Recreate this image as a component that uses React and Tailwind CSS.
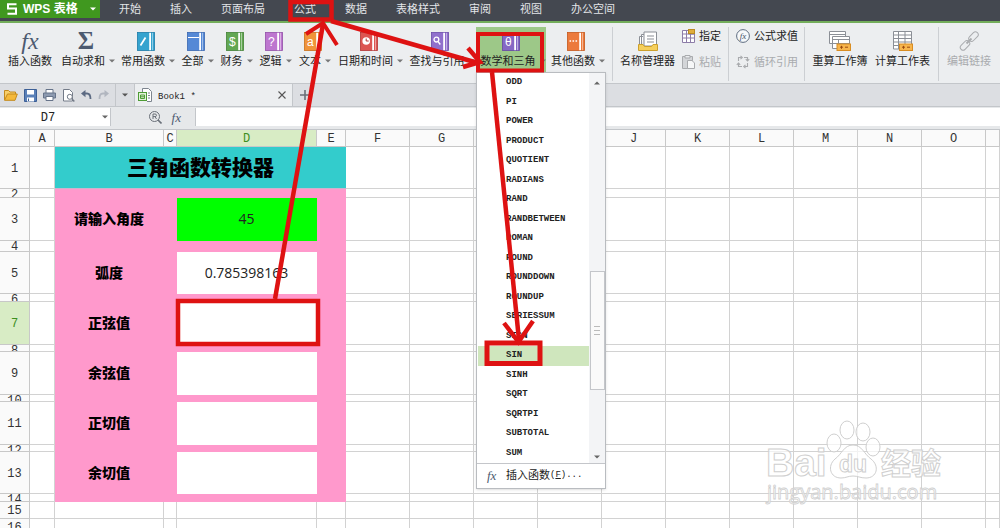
import { useState } from 'react';
import clsx from 'clsx';

const MENUS = ['开始', '插入', '页面布局', '公式', '数据', '表格样式', '审阅', '视图', '办公空间'];

const FUNCTIONS = [
  'ODD', 'PI', 'POWER', 'PRODUCT', 'QUOTIENT', 'RADIANS', 'RAND', 'RANDBETWEEN', 'ROMAN', 'ROUND',
  'ROUNDDOWN', 'ROUNDUP', 'SERIESSUM', 'SIGN', 'SIN', 'SINH', 'SQRT', 'SQRTPI', 'SUBTOTAL', 'SUM',
];

const COLUMNS = [
  ['A', 'w-[25px]'], ['B', 'w-[109px]'], ['C', 'w-[13px]'], ['D', 'w-[140px]'], ['E', 'w-[29px]'],
  ['F', 'w-16'], ['G', 'w-16'], ['H', 'w-16'], ['I', 'w-16'], ['J', 'w-16'],
  ['K', 'w-16'], ['L', 'w-16'], ['M', 'w-16'], ['N', 'w-16'], ['O', 'w-16'], ['', ''],
];

const ROWS = [
  { n: 1, h: 'h-[41px]', title: '三角函数转换器' },
  { n: 2, h: 'h-2' },
  { n: 3, h: 'h-[42px]', label: '请输入角度', value: '45', input: true },
  { n: 4, h: 'h-[10px]' },
  { n: 5, h: 'h-[41px]', label: '弧度', value: '0.785398163' },
  { n: 6, h: 'h-[7px]' },
  { n: 7, h: 'h-[42px]', label: '正弦值' },
  { n: 8, h: 'h-[6px]' },
  { n: 9, h: 'h-[42px]', label: '余弦值' },
  { n: 10, h: 'h-[6px]' },
  { n: 11, h: 'h-[42px]', label: '正切值' },
  { n: 12, h: 'h-[6px]' },
  { n: 13, h: 'h-[41px]', label: '余切值' },
  { n: 14, h: 'h-[7px]' },
  { n: 15, h: 'h-4', plain: true },
  { n: 16, h: 'h-4', plain: true },
];

function Caret({ className }) {
  return (
    <svg className={clsx('shrink-0', className)} width="6" height="4" viewBox="0 0 6 4">
      <path d="M0 0.5H6L3 3.5Z" fill="currentColor" />
    </svg>
  );
}

function Book({ fill, edge, children }) {
  return (
    <svg width="18" height="19" viewBox="0 0 18 19">
      <rect x="0.5" y="0.5" width="17" height="18" fill={fill} stroke={edge} strokeWidth="0.8" />
      <rect x="12.2" y="0.8" width="1.8" height="17.4" fill="#fff" />
      <rect x="15" y="0.8" width="1" height="17.4" fill="#fff" fillOpacity="0.45" />
      <g fill="none" stroke="#fff" strokeWidth="1.3">{children}</g>
    </svg>
  );
}

function BookText({ children }) {
  return (
    <text x="6.3" y="13.5" textAnchor="middle" fontSize="12" fill="#fff" stroke="none" fontFamily="Liberation Sans, sans-serif">
      {children}
    </text>
  );
}

function Fx({ className }) {
  return <span className={clsx('font-["Liberation_Serif",serif] italic text-[#4c5a70]', className)}>fx</span>;
}

const BOOKS = [
  { label: '常用函数', w: 'w-[60px]', icon: <Book fill="#35a3cf" edge="#1c7ba8"><path d="M3.5 13.5L8.5 5.5" strokeWidth="1.8" /></Book> },
  { label: '全部', w: 'w-[39px]', icon: <Book fill="#5589d6" edge="#3a66b0"><path d="M1 5.5H12" strokeWidth="1" /></Book> },
  { label: '财务', w: 'w-[39px]', icon: <Book fill="#62a752" edge="#438136"><BookText>$</BookText></Book> },
  { label: '逻辑', w: 'w-[39px]', icon: <Book fill="#bd76cf" edge="#9250a8"><BookText>?</BookText></Book> },
  { label: '文本', w: 'w-[40px]', icon: <Book fill="#f0943a" edge="#c96f1a"><BookText>a</BookText></Book> },
  { label: '日期和时间', w: 'w-[71px]', icon: <Book fill="#dc5552" edge="#b23534"><circle cx="6.2" cy="9" r="3.8" fill="#fff" stroke="none" /><path d="M6.2 6.5V9H8.7" stroke="#b23534" strokeWidth="1" /></Book> },
  { label: '查找与引用', w: 'w-[72px]', icon: <Book fill="#9070cc" edge="#6a4aa8"><circle cx="5.4" cy="7.6" r="2.4" /><path d="M7 9.5L9.3 12.5" /></Book> },
];

function ToolButton({ icon, label, width, caret = true, disabled, className }) {
  return (
    <button
      disabled={disabled}
      className={clsx('flex h-[46px] shrink-0 flex-col items-center pt-1', width, disabled ? 'text-[#a9abae]' : 'text-[#222]', className)}
    >
      <span className="flex h-5 items-center justify-center">{icon}</span>
      <span className={clsx('flex items-center gap-1 whitespace-nowrap leading-5', caret && 'pl-1')}>
        {label}
        {caret && <Caret className="text-[#777]" />}
      </span>
    </button>
  );
}

function SmallTool({ icon, label, disabled }) {
  return (
    <button disabled={disabled} className={clsx('flex h-[18px] items-center gap-1 whitespace-nowrap', disabled ? 'text-[#a9abae]' : 'text-[#222]')}>
      {icon}
      {label}
    </button>
  );
}

function Separator() {
  return <div className="h-[54px] w-px shrink-0 bg-[#cccfd3]" />;
}

function TitleBar() {
  return (
    <header className="flex h-[23px] shrink-0 items-start border-b-2 border-[#73ad5b] bg-[#444850] text-white">
      <button className="flex h-[18px] w-[100px] shrink-0 items-center bg-[#40981f] pl-[7px] text-xs font-bold">
        <svg width="10" height="12" viewBox="0 0 10 12" fill="none" stroke="#fff" strokeWidth="2">
          <path d="M9.5 1.2H1V5.5H9V10.8H0.5" />
        </svg>
        <span className="ml-1.5 whitespace-nowrap">WPS 表格</span>
        <Caret className="ml-auto mr-1" />
      </button>
      <nav className="ml-[19px] flex h-[18px] items-center gap-[29px] text-[#e3e5e8]">
        {MENUS.map(m => <button key={m} className="shrink-0 whitespace-nowrap">{m}</button>)}
      </nav>
    </header>
  );
}

function FunctionMenu({ selected, onSelect }) {
  return (
    <div className="absolute left-0 top-[45px] z-10 w-[130px] border border-[#b9bcc0] bg-white pb-px shadow-sm">
      <div className="flex h-[390px]">
        <div className="flex flex-1 flex-col pl-px">
          {FUNCTIONS.map(f => (
            <button
              key={f}
              onClick={() => onSelect(f)}
              className={clsx(
                'flex flex-1 items-center pl-7 text-left font-["Liberation_Mono",monospace] text-[9px] font-bold leading-none text-[#222]',
                f === selected && 'bg-[#cfe6bd]'
              )}
            >
              {f}
            </button>
          ))}
        </div>
        <div className="flex w-4 flex-col items-center bg-[#f3f4f6] text-[#666]">
          <Caret className="mt-2 rotate-180" />
          <div className="mt-[186px] flex h-[119px] w-[15px] flex-col items-center justify-center gap-[3px] border border-[#c4c6ca] bg-[#fafafa]">
            <i className="h-px w-1.5 bg-[#bbb]" />
            <i className="h-px w-1.5 bg-[#bbb]" />
            <i className="h-px w-1.5 bg-[#bbb]" />
          </div>
          <Caret className="mb-1 mt-auto" />
        </div>
      </div>
      <button className="flex h-6 w-full items-center border-t border-[#c4c6ca] pl-2.5 text-[#222]">
        <Fx className="w-[19px] text-left text-[13px]" />
        <span>插入函数</span>
        <span className="font-['Liberation_Mono',monospace] text-[9px]">(<u>F</u>)...</span>
      </button>
    </div>
  );
}

function Ribbon() {
  const [selected, setSelected] = useState('SIN');

  return (
    <div className="flex h-[61px] shrink-0 items-start border-b border-[#c3c6ca] bg-[#eceef0] pl-1 pt-1">
      <ToolButton width="w-[52px]" label="插入函数" caret={false} icon={<Fx className="text-2xl leading-5" />} />
      <ToolButton
        width="w-[60px]"
        label="自动求和"
        icon={<span className="font-['Liberation_Serif',serif] text-[25px] font-bold leading-5 text-[#4c5a70]">Σ</span>}
      />
      {BOOKS.map(b => <ToolButton key={b.label} width={b.w} label={b.label} icon={b.icon} />)}
      <div className="relative shrink-0">
        <ToolButton
          width="w-[70px]"
          className="bg-[#9dc888]"
          label="数学和三角"
          icon={<Book fill="#8668c4" edge="#6546a4"><BookText>θ</BookText></Book>}
        />
        <FunctionMenu selected={selected} onSelect={setSelected} />
      </div>
      <ToolButton
        width="w-[60px]"
        label="其他函数"
        icon={<Book fill="#ec7a3c" edge="#c4571c"><path d="M2.5 9H10.5" strokeWidth="1.6" strokeDasharray="1.6 1.4" /></Book>}
      />
      <div className="w-1.5 shrink-0" />
      <Separator />
      <ToolButton
        width="w-[69px]"
        label="名称管理器"
        caret={false}
        icon={
          <svg width="20" height="20" viewBox="0 0 20 20" fill="#fff" stroke="#8b8f96">
            <path d="M1.5 15V5.5H5M3.5 15V3.5H6" />
            <path d="M6 1H18.5V15H6Z" />
            <path d="M9 5H16M9 8H16M9 11H16" />
            <path d="M0.5 13.5H5L6.5 15.5H13.5L15 13.5H19.5V19.5H0.5Z" fill="#f5cf5c" stroke="#cda02c" />
          </svg>
        }
      />
      <div className="flex w-[46px] shrink-0 flex-col gap-2">
        <SmallTool
          label="指定"
          icon={
            <svg width="13" height="14" viewBox="0 0 13 14" fill="#fff" stroke="#8d7da8">
              <path d="M0.5 1.5H6.5V5H12.5V13.5H0.5Z" />
              <path d="M0.5 5H12.5M0.5 9H12.5M4.5 1.5V13.5M8.5 5V13.5" />
              <rect x="6.5" y="0.5" width="6" height="4" fill="#e0ad3e" stroke="#b98a22" />
            </svg>
          }
        />
        <SmallTool
          disabled
          label="粘贴"
          icon={
            <svg width="13" height="14" viewBox="0 0 13 14" fill="#d3d5d8" stroke="#a9abae">
              <path d="M0.5 1.5H10.5V13.5H0.5Z" />
              <path d="M3 0.5H8V3H3Z" fill="#eceef0" />
              <path d="M5.5 5.5H10L12.5 8V13.5H5.5Z" fill="#f6f7f8" />
            </svg>
          }
        />
      </div>
      <Separator />
      <div className="flex w-[75px] shrink-0 flex-col gap-2 pl-[7px]">
        <SmallTool
          label="公式求值"
          icon={
            <svg width="14" height="14" viewBox="0 0 14 14">
              <circle cx="7" cy="7" r="6.4" fill="#f6f8fa" stroke="#5e6c80" />
              <text x="7" y="10" fontSize="9" fontStyle="italic" textAnchor="middle" fill="#3f4f68" fontFamily="Liberation Serif, serif">fx</text>
            </svg>
          }
        />
        <SmallTool
          disabled
          label="循环引用"
          icon={
            <svg width="14" height="14" viewBox="0 0 14 14" fill="none" stroke="#a9abae" strokeWidth="1.1">
              <path d="M2.5 6V2.5H5.5M8 2.5H11.5V5.5M11.5 8V11.5H8.5M6 11.5H2.5V8.5" />
              <path d="M4.5 0.8L6.3 2.5L4.5 4.2M9.8 4.2L11.5 6L13.2 4.2M9.5 9.8L7.7 11.5L9.5 13.2M0.8 9.8L2.5 8L4.2 9.8" />
            </svg>
          }
        />
      </div>
      <Separator />
      <ToolButton
        width="w-[70px]"
        label="重算工作簿"
        caret={false}
        icon={
          <svg width="22" height="20" viewBox="0 0 22 20" fill="#fff" stroke="#8b8f96">
            <path d="M0.5 0.5H16.5V12.5H0.5ZM0.5 3.5H16.5" />
            <path d="M3.5 5.5H20.5V17.5H3.5ZM3.5 8.5H20.5M9.5 8.5V17M3.5 12.5H20" />
            <rect x="8" y="13" width="13.5" height="6.5" fill="#f7b54d" stroke="#d98d22" />
            <path d="M11 16.2H14M12.5 14.8V17.8M16 16.2H19" stroke="#9a4a10" />
          </svg>
        }
      />
      <ToolButton
        width="w-[55px]"
        label="计算工作表"
        caret={false}
        icon={
          <svg width="22" height="20" viewBox="0 0 22 20" fill="#fff" stroke="#8b8f96">
            <path d="M1.5 0.5H19.5V18H1.5Z" />
            <path d="M1.5 4H19.5M1.5 7.5H19.5M1.5 11H19.5M1.5 14.5H19.5M6.5 0.5V18M13 0.5V18" />
            <rect x="7.5" y="13" width="13" height="6.5" fill="#f7b54d" stroke="#d98d22" />
            <path d="M10 16.2H13M11.5 14.8V17.8M15 16.2H18" stroke="#9a4a10" />
          </svg>
        }
      />
      <div className="w-2 shrink-0" />
      <Separator />
      <ToolButton
        disabled
        width="w-[60px]"
        label="编辑链接"
        caret={false}
        icon={
          <svg width="20" height="20" viewBox="0 0 20 20" fill="none" stroke="#a9abae">
            <rect x="9" y="2.8" width="11" height="5.6" rx="2.8" transform="rotate(-45 14.5 5.6)" />
            <rect x="0.5" y="11.6" width="11" height="5.6" rx="2.8" transform="rotate(-45 6 14.4)" />
            <path d="M7.5 12.5L12.5 7.5" strokeWidth="1.8" />
          </svg>
        }
      />
    </div>
  );
}

function QuickBar() {
  return (
    <div className="flex h-[23px] shrink-0 items-stretch border-b border-[#c3c6ca] bg-[#dcdee2] text-[#555]">
      <div className="flex w-[115px] shrink-0 items-center justify-between pl-1 pr-1.5">
        <button aria-label="打开">
          <svg width="14" height="12" viewBox="0 0 14 12" fill="#f8cf6a" stroke="#c48a1c">
            <path d="M0.5 11V1.5H4.5L6 3H11.5V5" />
            <path d="M0.5 11.3L3.5 5H13.3L11 11.3Z" fill="#f5b93a" />
          </svg>
        </button>
        <button aria-label="保存">
          <svg width="13" height="13" viewBox="0 0 13 13" fill="#5a80b8" stroke="#3c5f96">
            <path d="M0.5 0.5H12.5V12.5H0.5Z" />
            <path d="M3 1H10V5.5H3ZM3 8.5H10V12.5H3Z" fill="#fff" stroke="none" />
            <path d="M4.5 9.5V12" />
          </svg>
        </button>
        <button aria-label="打印">
          <svg width="13" height="12" viewBox="0 0 13 12" fill="#fff" stroke="#67748a">
            <path d="M3 4V0.5H10V4" />
            <path d="M0.5 4H12.5V9H0.5Z" fill="#8d9ab0" />
            <path d="M3 7.5H10V11.5H3Z" />
          </svg>
        </button>
        <button aria-label="打印预览">
          <svg width="12" height="13" viewBox="0 0 12 13" fill="#fff" stroke="#737b88">
            <path d="M0.5 0.5H6.5L9.5 3.5V12H0.5Z" />
            <circle cx="6.8" cy="7.8" r="2.5" />
            <path d="M8.8 9.8L11.3 12.5" strokeWidth="1.5" />
          </svg>
        </button>
        <button aria-label="撤销">
          <svg width="11" height="10" viewBox="0 0 11 10" fill="none" stroke="#5c6a82" strokeWidth="1.8">
            <path d="M2.5 3.5H6C9 3.5 9.5 6 9.5 9" />
            <path d="M4.5 0L0 3.6L4.5 7.2Z" fill="#5c6a82" stroke="none" />
          </svg>
        </button>
        <button aria-label="恢复">
          <svg width="11" height="10" viewBox="0 0 11 10" fill="none" stroke="#b1b6bf" strokeWidth="1.8">
            <path d="M8.5 3.5H5C2 3.5 1.5 6 1.5 9" />
            <path d="M6.5 0L11 3.6L6.5 7.2Z" fill="#b1b6bf" stroke="none" />
          </svg>
        </button>
      </div>
      <button aria-label="更多" className="flex w-[19px] shrink-0 items-center justify-center border-l border-[#c3c6ca]"><Caret /></button>
      <div className="flex w-[159px] shrink-0 items-center border-x border-[#c3c6ca] bg-[#eceef0] pl-[3px] pr-1.5">
        <svg width="14" height="14" viewBox="0 0 14 14" fill="#fff" stroke="#7d858f">
          <path d="M4.5 4V0.5H10.5L13.5 3.5V13.5H9" />
          <path d="M10 5H12M10 7.5H12M10 10H12" />
          <rect x="0.5" y="4.5" width="8" height="8" fill="#e2f1da" stroke="#4e9c36" />
          <path d="M2.5 7H6.5M2.5 7V10.5H6.5V7M2.5 8.8H6.5" stroke="#4e9c36" fill="none" />
        </svg>
        <span className="ml-1.5 pt-1 font-['Liberation_Mono',monospace] text-[9px] leading-none text-[#222]">Book1 *</span>
        <button aria-label="关闭" className="ml-auto">
          <svg width="8" height="8" viewBox="0 0 8 8" stroke="#555" strokeWidth="1.1"><path d="M0.5 0.5L7.5 7.5M7.5 0.5L0.5 7.5" /></svg>
        </button>
      </div>
      <button aria-label="新建" className="flex w-6 items-center justify-center">
        <svg width="10" height="10" viewBox="0 0 10 10" stroke="#6a6e76" strokeWidth="1.6"><path d="M5 0V10M0 5H10" /></svg>
      </button>
    </div>
  );
}

function FormulaBar() {
  return (
    <div className="flex h-[22px] shrink-0 items-stretch bg-[#e6e8ea] pb-[3px] pt-px">
      <div className="flex w-[111px] shrink-0 items-center border-r border-[#c3c6ca] bg-white pr-0.5">
        <input
          aria-label="名称框"
          defaultValue="D7"
          className="w-24 bg-transparent pt-0.5 text-center font-['Liberation_Mono',monospace] text-xs text-[#222] outline-none"
        />
        <Caret className="ml-auto text-[#666]" />
      </div>
      <div className="flex w-[84px] shrink-0 items-center justify-end gap-2.5 pr-3.5">
        <svg width="13" height="13" viewBox="0 0 13 13" fill="none" stroke="#6a7079">
          <circle cx="5.5" cy="5.5" r="5" />
          <path d="M9 9L12.5 12.5" strokeWidth="1.6" />
          <path d="M4 8V3H6Q7.5 3 7.5 4.3Q7.5 5.6 6 5.6H4M6 5.6L7.5 8" />
        </svg>
        <Fx className="text-[13px] leading-none" />
      </div>
      <input aria-label="编辑栏" className="min-w-0 flex-1 border-l border-[#c3c6ca] bg-white px-1 outline-none" />
    </div>
  );
}

function cellClass(row, col) {
  const inCard = 'BCDE'.includes(col) && col !== '' && row.n <= 14;
  if (!inCard) return 'border-[#d2d2d2]';
  if (col === 'D' && row.label) return row.input ? 'border-[#00ff00] bg-[#00ff00]' : 'border-white bg-white';
  return 'border-[#ff99cc] bg-[#ff99cc]';
}

function Sheet() {
  return (
    <table className="w-full min-w-[1000px] table-fixed border-separate border-spacing-0 border-t border-[#c3c6ca]">
      <thead>
        <tr className="font-['Liberation_Mono',monospace] text-xs text-[#333]">
          <th aria-label="全选" className="w-[30px] border-b border-r border-[#c8c8c8] bg-[#fafafa] p-0" />
          {COLUMNS.map(([name, w], i) => (
            <th
              key={i}
              className={clsx('border-b border-r border-[#c8c8c8] p-0 font-normal', w, name === 'D' ? 'bg-[#d8ecc5] text-[#3c8f1f]' : 'bg-[#fafafa]')}
            >
              <div className="flex h-4 items-center justify-center pt-px leading-none">{name}</div>
            </th>
          ))}
        </tr>
      </thead>
      <tbody>
        {ROWS.map(row => (
          <tr key={row.n}>
            <th
              className={clsx(
                'border-b border-r border-[#c8c8c8] p-0 font-["Liberation_Mono",monospace] text-xs font-normal leading-none',
                row.n === 7 ? 'bg-[#d8ecc5] text-[#3c8f1f]' : 'bg-[#fafafa] text-[#333]'
              )}
            >
              <div className={clsx('flex justify-center overflow-hidden', row.h, row.label || row.title || row.plain ? 'items-center pt-0.5' : 'items-start')}>
                {row.n}
              </div>
            </th>
            {COLUMNS.map(([name], i) => {
              if (row.title && 'CDE'.includes(name) && name !== '') return null;
              if (row.title && name === 'B') {
                return (
                  <td key={i} colSpan={4} className="border-b border-[#ccb4cc] bg-[#33cccc] p-0 text-center text-[21px] font-black leading-none text-black">
                    {row.title}
                  </td>
                );
              }
              return (
                <td key={i} className={clsx('border-b border-r p-0 text-center text-sm leading-none', cellClass(row, name))}>
                  {name === 'B' && <span className="font-black text-black">{row.label}</span>}
                  {name === 'D' && <span className="font-['Open_Sans',sans-serif] text-[#222]">{row.value}</span>}
                </td>
              );
            })}
          </tr>
        ))}
      </tbody>
    </table>
  );
}

// red boxes and arrows: cell D7 -> 公式 -> 数学和三角 -> SIN
function Annotations() {
  return (
    <svg className="pointer-events-none absolute left-0 top-0 z-20" width="620" height="380" fill="none" stroke="#de1212" strokeWidth="4.5">
      <rect x="290.5" y="2" width="41" height="17.5" />
      <rect x="178" y="301" width="140" height="43" />
      <rect x="478" y="34" width="64" height="36.5" strokeWidth="4" />
      <rect x="487" y="343" width="53" height="20.5" strokeWidth="5" />
      <path d="M275 299L323 24" />
      <path d="M306 34L323 23L337 45" strokeWidth="4" />
      <path d="M331 21L478 63" />
      <path d="M468 48L480 62L463 67" />
      <path d="M492 72L519 340" />
      <path d="M504 323L518.5 342L533 321" />
    </svg>
  );
}

function Watermark() {
  return (
    <svg className="pointer-events-none absolute right-[50px] top-[418px]" width="200" height="92" fill="#fff" fillOpacity="0.7" stroke="#cfcfcf">
      <g fontFamily="Liberation Sans, Noto Sans CJK SC, sans-serif">
        <text x="16" y="58" fontSize="39" fontWeight="bold">Bai</text>
        <ellipse cx="84" cy="25" rx="7" ry="9" />
        <ellipse cx="97" cy="12" rx="7" ry="9" />
        <ellipse cx="113" cy="14" rx="7" ry="9" />
        <ellipse cx="123" cy="29" rx="7" ry="9" />
        <path d="M103 27C112 27 114 36 121 41C130 48 127 60 116 60C110 60 108 58 103 58C98 58 96 60 91 60C80 60 77 48 85 41C92 36 94 27 103 27Z" />
        <text x="89" y="54" fontSize="23" fontWeight="bold">du</text>
        <text x="131" y="56" fontSize="30" fontWeight="bold">经验</text>
        <text x="17" y="81" fontSize="20" fontFamily="Open Sans, sans-serif" strokeWidth="0.8">jingyan.baidu.com</text>
      </g>
    </svg>
  );
}

export default function App() {
  return (
    <div className="relative flex h-screen flex-col overflow-hidden bg-white font-['Liberation_Sans','Noto_Sans_CJK_SC',sans-serif] text-[11px]">
      <TitleBar />
      <Ribbon />
      <QuickBar />
      <FormulaBar />
      <Sheet />
      <Watermark />
      <Annotations />
    </div>
  );
}
